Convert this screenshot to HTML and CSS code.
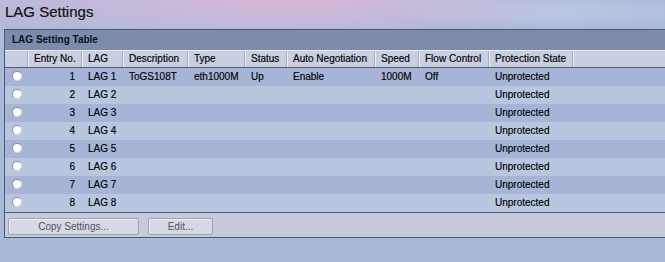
FILE: index.html
```html
<!DOCTYPE html>
<html>
<head>
<meta charset="utf-8">
<link rel="stylesheet" href="styles.css">
</head>
<body>
<h1 class="title">LAG Settings</h1>
<div class="panel">
  <div class="panel-head">LAG Setting Table</div>
  <table class="grid">
    <colgroup>
      <col class="c-radio"><col class="c-entry"><col class="c-lag"><col class="c-desc"><col class="c-type"><col class="c-status"><col class="c-auto"><col class="c-speed"><col class="c-flow"><col class="c-prot"><col class="c-fill">
    </colgroup>
    <thead>
      <tr>
        <th></th><th>Entry No.</th><th>LAG</th><th>Description</th><th>Type</th><th>Status</th><th>Auto Negotiation</th><th>Speed</th><th>Flow Control</th><th>Protection State</th><th class="fill"></th>
      </tr>
    </thead>
    <tbody>
      <tr class="dark"><td><span class="radio"></span></td><td class="num">1</td><td>LAG 1</td><td>ToGS108T</td><td>eth1000M</td><td>Up</td><td>Enable</td><td>1000M</td><td>Off</td><td>Unprotected</td><td></td></tr>
      <tr class="light"><td><span class="radio"></span></td><td class="num">2</td><td>LAG 2</td><td></td><td></td><td></td><td></td><td></td><td></td><td>Unprotected</td><td></td></tr>
      <tr class="dark"><td><span class="radio"></span></td><td class="num">3</td><td>LAG 3</td><td></td><td></td><td></td><td></td><td></td><td></td><td>Unprotected</td><td></td></tr>
      <tr class="light"><td><span class="radio"></span></td><td class="num">4</td><td>LAG 4</td><td></td><td></td><td></td><td></td><td></td><td></td><td>Unprotected</td><td></td></tr>
      <tr class="dark"><td><span class="radio"></span></td><td class="num">5</td><td>LAG 5</td><td></td><td></td><td></td><td></td><td></td><td></td><td>Unprotected</td><td></td></tr>
      <tr class="light"><td><span class="radio"></span></td><td class="num">6</td><td>LAG 6</td><td></td><td></td><td></td><td></td><td></td><td></td><td>Unprotected</td><td></td></tr>
      <tr class="dark"><td><span class="radio"></span></td><td class="num">7</td><td>LAG 7</td><td></td><td></td><td></td><td></td><td></td><td></td><td>Unprotected</td><td></td></tr>
      <tr class="light"><td><span class="radio"></span></td><td class="num">8</td><td>LAG 8</td><td></td><td></td><td></td><td></td><td></td><td></td><td>Unprotected</td><td></td></tr>
    </tbody>
  </table>
  <div class="panel-foot">
    <button class="btn btn-copy">Copy Settings...</button>
    <button class="btn btn-edit">Edit...</button>
  </div>
</div>
</body>
</html>
```
FILE: styles.css
```css
html, body {
  margin: 0;
  padding: 0;
}
body {
  width: 665px;
  height: 262px;
  overflow: hidden;
  font-family: "Liberation Sans", Arial, sans-serif;
  color: #000;
  background:
    radial-gradient(ellipse 300px 44px at 290px 0px, rgba(216, 184, 216, 1), rgba(216, 184, 216, 0) 100%),
    radial-gradient(ellipse 180px 20px at 560px 12px, rgba(190, 205, 228, 0.8), rgba(190, 205, 228, 0) 100%),
    linear-gradient(170deg, #bab8da 0px, #aebbda 60px, #a9b9d9 120px);
}
.title {
  margin: 0;
  height: 29px;
  padding: 3px 0 0 5px;
  box-sizing: border-box;
  font-size: 15px;
  font-weight: normal;
  line-height: 18px;
  color: #111;
  -webkit-text-stroke: 0.2px #111;
}
.panel {
  margin-left: 4px;
  width: 661px;
  border-left: 1px solid #4f5872;
  border-bottom: 1px solid #4f5872;
}
.panel-head {
  height: 20px;
  border-top: 1px solid #4c5670;
  background: #7d8caa;
  padding-left: 7px;
  font-size: 10px;
  font-weight: bold;
  line-height: 20px;
  color: #0c1020;
}
.grid {
  width: 660px;
  table-layout: fixed;
  border-collapse: collapse;
  border-spacing: 0;
  font-size: 10px;
  -webkit-text-stroke: 0.15px #000;
}
.c-radio { width: 23px; }
.c-entry { width: 54px; }
.c-lag { width: 41px; }
.c-desc { width: 65px; }
.c-type { width: 57px; }
.c-status { width: 42px; }
.c-auto { width: 88px; }
.c-speed { width: 44px; }
.c-flow { width: 70px; }
.c-prot { width: 84px; }
.c-fill { width: 92px; }
.grid th {
  height: 17px;
  padding: 0 0 0 6px;
  text-align: left;
  font-weight: normal;
  white-space: nowrap;
  background: #c9cee0;
  border-bottom: 1px solid #505a74;
  box-shadow: inset 1px 1px 0 #e9ecf5, inset -1px 0 0 #a6aec4;
  line-height: 17px;
}
.grid th:first-child {
  box-shadow: inset 0 1px 0 #e9ecf5, inset -1px 0 0 #a6aec4;
}
.grid th.fill {
  box-shadow: inset 1px 1px 0 #e9ecf5;
}
.grid td {
  height: 18px;
  padding: 0 0 0 6px;
  white-space: nowrap;
  line-height: 18px;
}
.grid td:first-child {
  padding-left: 7px;
}
.grid td.num {
  text-align: right;
  padding: 0 7px 0 0;
}
.grid tr.dark td {
  background: #a6b5d5;
}
.grid tr.light td {
  background: #b9c6df;
}
.radio {
  display: inline-block;
  width: 10px;
  height: 10px;
  box-sizing: border-box;
  border-radius: 50%;
  border: 1px solid #8d8f98;
  border-right-color: #d8d8d8;
  border-bottom-color: #d8d8d8;
  background: radial-gradient(circle at 50% 50%, #ffffff 0 60%, #e4e4e4 100%);
  vertical-align: middle;
  margin-top: -2px;
}
.panel-foot {
  height: 25px;
  border-top: 1px solid #525c76;
  background: #c5cbdd;
  display: flex;
  align-items: flex-start;
  gap: 9px;
  padding: 5px 0 0 3px;
  box-sizing: border-box;
}
.btn {
  height: 17px;
  margin: 0;
  padding: 0;
  border: 1px solid #9da3b3;
  border-radius: 2px;
  background: #d6d9e3;
  box-shadow: inset 1px 1px 0 #eceef4;
  font-family: "Liberation Sans", Arial, sans-serif;
  font-size: 10px;
  color: #50545e;
  line-height: 15px;
}
.btn-copy { width: 131px; }
.btn-edit { width: 65px; }
```
